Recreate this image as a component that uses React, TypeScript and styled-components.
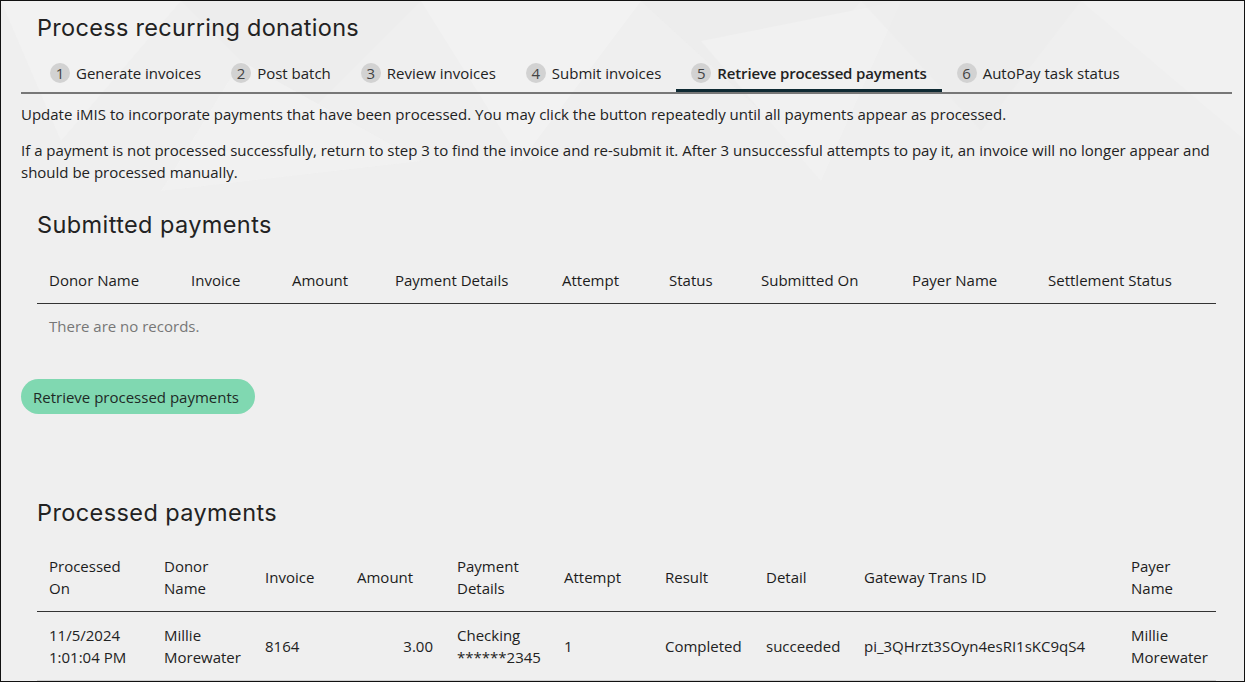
import React from "react";
import styled, { createGlobalStyle } from "styled-components";

const GlobalStyle = createGlobalStyle`
  html, body { margin: 0; padding: 0; background: #efefef; }
  body { font-family: "Open Sans", "Noto Sans", sans-serif; color: #222; }
  * { box-sizing: border-box; }
`;

const Frame = styled.div`
  position: relative;
  width: 1245px;
  height: 682px;
  border: 1px solid #111;
  background: #efefef;
  overflow: hidden;
`;

const Decor = styled.svg`
  position: absolute;
  left: 0;
  top: 0;
  width: 1245px;
  height: 200px;
  pointer-events: none;
`;

const Content = styled.div`
  position: relative;
  padding: 0 12px 0 20px;
`;

const PageTitle = styled.h1`
  margin: 0;
  padding: 13px 16px 0;
  font-family: Inter, "Noto Sans", sans-serif;
  font-weight: 400;
  font-size: 23.5px;
  line-height: 28px;
  color: #222;
  letter-spacing: 0.3px;
`;

const TabBar = styled.div`
  display: flex;
  margin-top: 17px;
  padding-left: 14px;
  border-bottom: 2px solid #777;
`;

const Tab = styled.div<{ $active?: boolean }>`
  display: flex;
  align-items: center;
  height: 33px;
  padding: 0 15px 2px;
  font-size: 15px;
  font-weight: ${(p) => (p.$active ? 600 : 400)};
  letter-spacing: ${(p) => (p.$active ? "-0.15px" : "0")};
  color: #222;
  border-bottom: 3px solid ${(p) => (p.$active ? "#0f2a33" : "transparent")};
`;

const StepNum = styled.span`
  display: inline-flex;
  align-items: center;
  justify-content: center;
  width: 20px;
  height: 20px;
  border-radius: 50%;
  background: #d2d2d2;
  color: #444;
  font-weight: 400;
  letter-spacing: 0;
  margin-right: 6px;
  font-size: 15px;
`;

const Para = styled.p`
  margin: 9px 0 0;
  font-size: 15px;
  line-height: 22px;
  color: #222;
  & + & { margin-top: 14px; }
`;

const Section = styled.section<{ $top: number }>`
  padding: 0 16px;
  margin-top: ${(p) => p.$top}px;
`;

const SectionTitle = styled.h2`
  margin: 0;
  font-family: Inter, "Noto Sans", sans-serif;
  font-weight: 400;
  font-size: 23.5px;
  line-height: 28px;
  letter-spacing: 0.4px;
  color: #222;
`;

const Table = styled.table<{ $top: number }>`
  width: 100%;
  border-collapse: collapse;
  table-layout: fixed;
  margin-top: ${(p) => p.$top}px;
  font-size: 15px;
  line-height: 22px;
`;

const Th = styled.th`
  text-align: left;
  font-weight: 400;
  color: #1c1c1c;
  padding: 12px 12px;
  vertical-align: middle;
  border-bottom: 1px solid #333;
`;

const Td = styled.td<{ $right?: boolean }>`
  padding: 12px 12px;
  vertical-align: middle;
  text-align: ${(p) => (p.$right ? "right" : "left")};
  color: #222;
  border-bottom: 1px solid #cfcfcf;
`;

const EmptyCell = styled.td`
  padding: 11px 12px;
  color: #777;
`;

const Button = styled.button`
  display: inline-flex;
  align-items: center;
  height: 35px;
  margin-top: 31px;
  padding: 0 16px 0 12px;
  border: none;
  border-radius: 18px;
  background: #80d8b1;
  color: #1e2a26;
  font-family: "Open Sans", "Noto Sans", sans-serif;
  font-size: 15px;
  cursor: pointer;
`;

const submittedCols = [
  ["Donor Name", 142],
  ["Invoice", 101],
  ["Amount", 103],
  ["Payment Details", 167],
  ["Attempt", 107],
  ["Status", 92],
  ["Submitted On", 151],
  ["Payer Name", 136],
  ["Settlement Status", 180],
] as const;

const processedCols: [React.ReactNode, number][] = [
  [<>Processed<br />On</>, 115],
  [<>Donor<br />Name</>, 101],
  ["Invoice", 92],
  ["Amount", 100],
  [<>Payment<br />Details</>, 107],
  ["Attempt", 101],
  ["Result", 101],
  ["Detail", 98],
  ["Gateway Trans ID", 267],
  [<>Payer<br />Name</>, 97],
];

const tabs = [
  "Generate invoices",
  "Post batch",
  "Review invoices",
  "Submit invoices",
  "Retrieve processed payments",
  "AutoPay task status",
];

export default function App() {
  return (
    <>
      <GlobalStyle />
      <Frame>
        <Decor viewBox="0 0 1245 200" preserveAspectRatio="none">
          <polygon points="0,0 180,0 60,140" fill="#f2f2f2" />
          <polygon points="180,0 420,0 300,120" fill="#ececec" opacity="0.5" />
          <polygon points="420,0 640,0 520,160" fill="#f2f2f2" />
          <polygon points="640,0 860,0 760,110" fill="#ececec" opacity="0.5" />
          <polygon points="700,40 900,0 820,180" fill="#f1f1f1" />
          <polygon points="860,0 1080,0 980,130" fill="#ececec" opacity="0.4" />
          <polygon points="1080,0 1245,0 1245,140" fill="#f1f1f1" />
          <polygon points="240,60 420,160 160,190" fill="#f2f2f2" opacity="0.7" />
        </Decor>
        <Content>
          <PageTitle>Process recurring donations</PageTitle>
          <TabBar>
            {tabs.map((t, i) => (
              <Tab key={t} $active={i === 4}>
                <StepNum>{i + 1}</StepNum>
                {t}
              </Tab>
            ))}
          </TabBar>
          <Para>
            Update iMIS to incorporate payments that have been processed. You may click the button
            repeatedly until all payments appear as processed.
          </Para>
          <Para>
            If a payment is not processed successfully, return to step 3 to find the invoice and
            re-submit it. After 3 unsuccessful attempts to pay it, an invoice will no longer appear
            and should be processed manually.
          </Para>
          <Section $top={28}>
            <SectionTitle>Submitted payments</SectionTitle>
            <Table $top={18}>
              <colgroup>
                {submittedCols.map(([, w], i) => (
                  <col key={i} style={{ width: w }} />
                ))}
              </colgroup>
              <thead>
                <tr>
                  {submittedCols.map(([h], i) => (
                    <Th key={i}>{h}</Th>
                  ))}
                </tr>
              </thead>
              <tbody>
                <tr>
                  <EmptyCell colSpan={9}>There are no records.</EmptyCell>
                </tr>
              </tbody>
            </Table>
          </Section>
          <Button>Retrieve processed payments</Button>
          <Section $top={85}>
            <SectionTitle>Processed payments</SectionTitle>
            <Table $top={16}>
              <colgroup>
                {processedCols.map(([, w], i) => (
                  <col key={i} style={{ width: w }} />
                ))}
              </colgroup>
              <thead>
                <tr>
                  {processedCols.map(([h], i) => (
                    <Th key={i}>{h}</Th>
                  ))}
                </tr>
              </thead>
              <tbody>
                <tr>
                  <Td>11/5/2024<br />1:01:04 PM</Td>
                  <Td>Millie<br />Morewater</Td>
                  <Td>8164</Td>
                  <Td $right>3.00</Td>
                  <Td>Checking<br />******2345</Td>
                  <Td>1</Td>
                  <Td>Completed</Td>
                  <Td>succeeded</Td>
                  <Td>pi_3QHrzt3SOyn4esRI1sKC9qS4</Td>
                  <Td>Millie<br />Morewater</Td>
                </tr>
              </tbody>
            </Table>
          </Section>
        </Content>
      </Frame>
    </>
  );
}
